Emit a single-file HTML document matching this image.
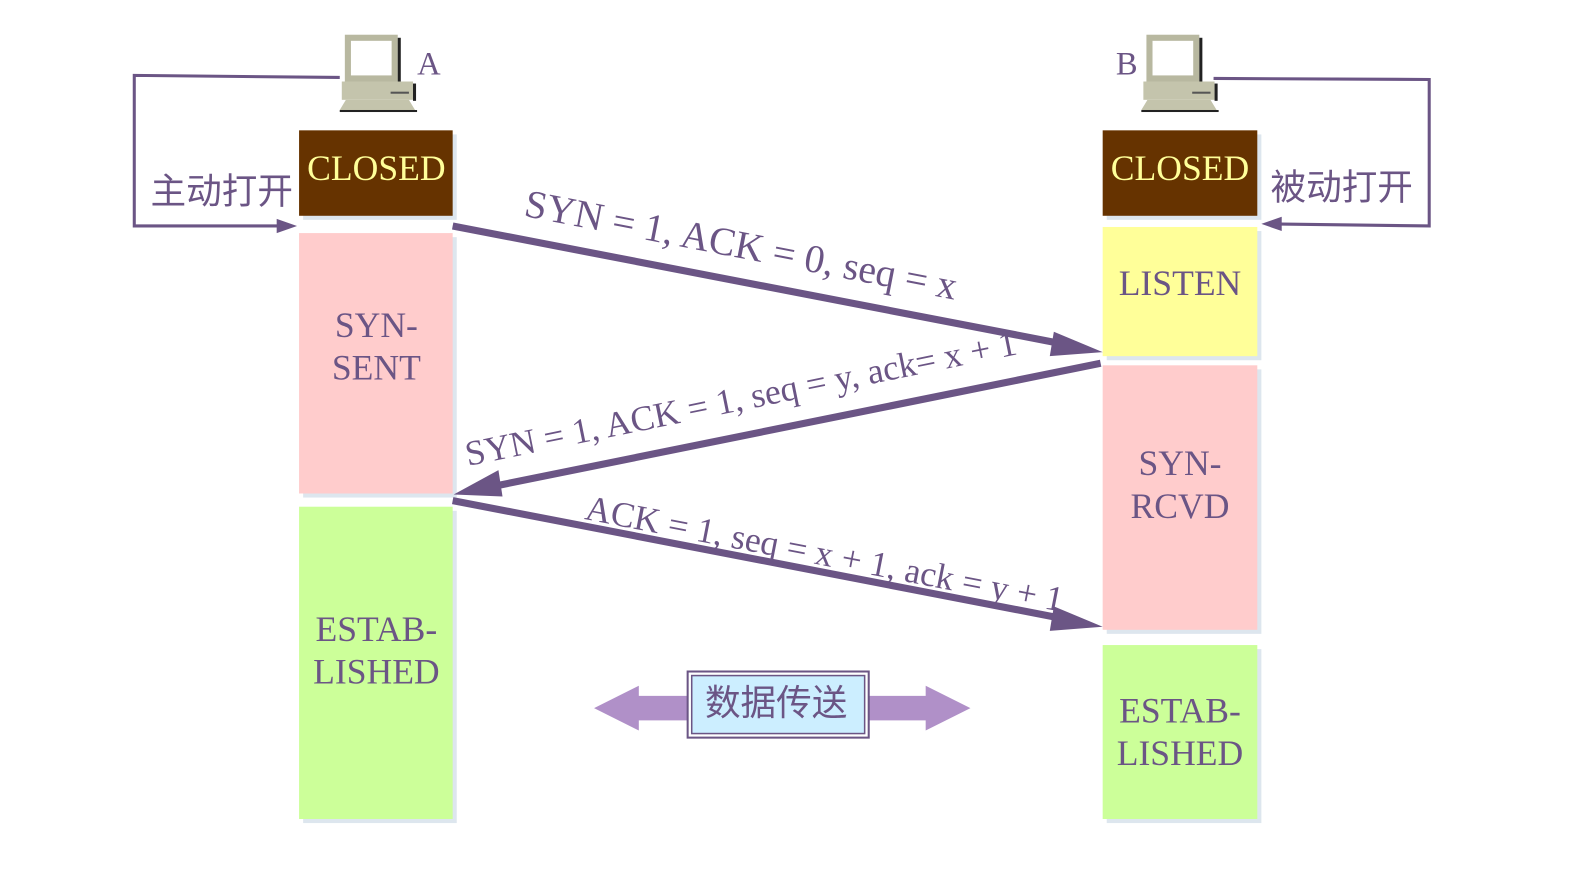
<!DOCTYPE html>
<html><head><meta charset="utf-8"><style>
html,body{margin:0;padding:0;background:#fff;width:1594px;height:870px;overflow:hidden}
</style></head><body>
<svg width="1594" height="870" viewBox="0 0 1567 855" xmlns="http://www.w3.org/2000/svg" font-family="Liberation Serif, serif">
<defs>
<g id="pc">
<rect x="3" y="0" width="52" height="46" fill="#b8b8a0"/>
<rect x="9" y="6" width="40" height="34" fill="#fff"/>
<rect x="55" y="3" width="3" height="44" fill="#222"/>
<rect x="0" y="46" width="70" height="18" fill="#c4c4ac"/>
<rect x="70" y="48" width="3" height="17" fill="#222"/>
<rect x="48" y="56" width="18" height="2" fill="#555"/>
<polygon points="4,64 66,64 72,74 -2,74" fill="#c4c4ac"/>
<rect x="-2" y="74" width="76" height="2" fill="#222"/>
</g>
</defs>
<polyline points="334,76 132,74 132,222 282,222" fill="none" stroke="#6b5585" stroke-width="3"/>
<polygon points="292,222 272,215 272,229" fill="#6b5585"/>
<polyline points="1193,77 1405,78 1405,222 1250,220" fill="none" stroke="#6b5585" stroke-width="3"/>
<polygon points="1240,220 1260,213 1260,227" fill="#6b5585"/>
<use href="#pc" x="336" y="34"/>
<use href="#pc" x="1124" y="34"/>
<text x="410" y="73" font-size="32" fill="#6b5585">A</text>
<text x="1097" y="73" font-size="32" fill="#6b5585">B</text>
<text x="148" y="200" font-size="35" fill="#6b5585" font-family="Noto Sans CJK SC, sans-serif">主动打开</text>
<text x="1249" y="196" font-size="35" fill="#6b5585" font-family="Noto Sans CJK SC, sans-serif">被动打开</text>
<g fill="#dde6ee">
<rect x="298" y="132" width="151" height="84"/><rect x="298" y="233" width="151" height="256"/><rect x="298" y="502" width="151" height="307"/>
<rect x="1088" y="132" width="152" height="84"/><rect x="1088" y="227" width="152" height="127"/><rect x="1088" y="363" width="152" height="260"/><rect x="1088" y="638" width="152" height="171"/>
</g>
<rect x="294" y="128" width="151" height="84" fill="#663300"/>
<rect x="294" y="229" width="151" height="256" fill="#ffcccc"/>
<rect x="294" y="498" width="151" height="307" fill="#ccff99"/>
<rect x="1084" y="128" width="152" height="84" fill="#663300"/>
<rect x="1084" y="223" width="152" height="127" fill="#ffff99"/>
<rect x="1084" y="359" width="152" height="260" fill="#ffcccc"/>
<rect x="1084" y="634" width="152" height="171" fill="#ccff99"/>
<g font-size="35" text-anchor="middle">
<text x="370" y="177" fill="#ffff99">CLOSED</text>
<text x="1160" y="177" fill="#ffff99">CLOSED</text>
<g fill="#6b5585">
<text x="370" y="331">SYN-</text><text x="370" y="373">SENT</text>
<text x="370" y="630">ESTAB-</text><text x="370" y="672">LISHED</text>
<text x="1160" y="290">LISTEN</text>
<text x="1160" y="467">SYN-</text><text x="1160" y="509">RCVD</text>
<text x="1160" y="710">ESTAB-</text><text x="1160" y="752">LISHED</text>
</g></g>
<g stroke="#6b5585" stroke-width="7" fill="#6b5585">
<line x1="445" y1="222" x2="1045" y2="338"/>
<line x1="1082" y1="357" x2="485" y2="478"/>
<line x1="445" y1="492" x2="1045" y2="608"/>
</g>
<g fill="#6b5585">
<polygon points="1084,346 1036,326 1032,350"/>
<polygon points="446,486 490,462 494,488"/>
<polygon points="1084,616 1036,596 1032,620"/>
</g>
<g fill="#6b5585">
<text transform="translate(514,212) rotate(11)" font-size="39">SYN = 1, ACK = 0, seq = x</text>
<text transform="translate(460,458) rotate(-11.5)" font-size="35">SYN = 1, ACK = 1, seq = y, ack= x + 1</text>
<text transform="translate(574,510) rotate(11)" font-size="35">ACK = 1, seq = x + 1, ack = y + 1</text>
</g>
<polygon points="584,696 628,674 628,684 676,684 676,708 628,708 628,718" fill="#b090c8"/>
<polygon points="954,696 910,674 910,684 854,684 854,708 910,708 910,718" fill="#b090c8"/>
<rect x="676" y="660" width="178" height="65" fill="#fff" stroke="#6b5585" stroke-width="2"/>
<rect x="680" y="664" width="170" height="57" fill="#cceeff" stroke="#6b5585" stroke-width="1.5"/>
<text x="763" y="703" font-size="35" fill="#6b5585" text-anchor="middle" font-family="Noto Sans CJK SC, sans-serif">数据传送</text>
</svg>
</body></html>
